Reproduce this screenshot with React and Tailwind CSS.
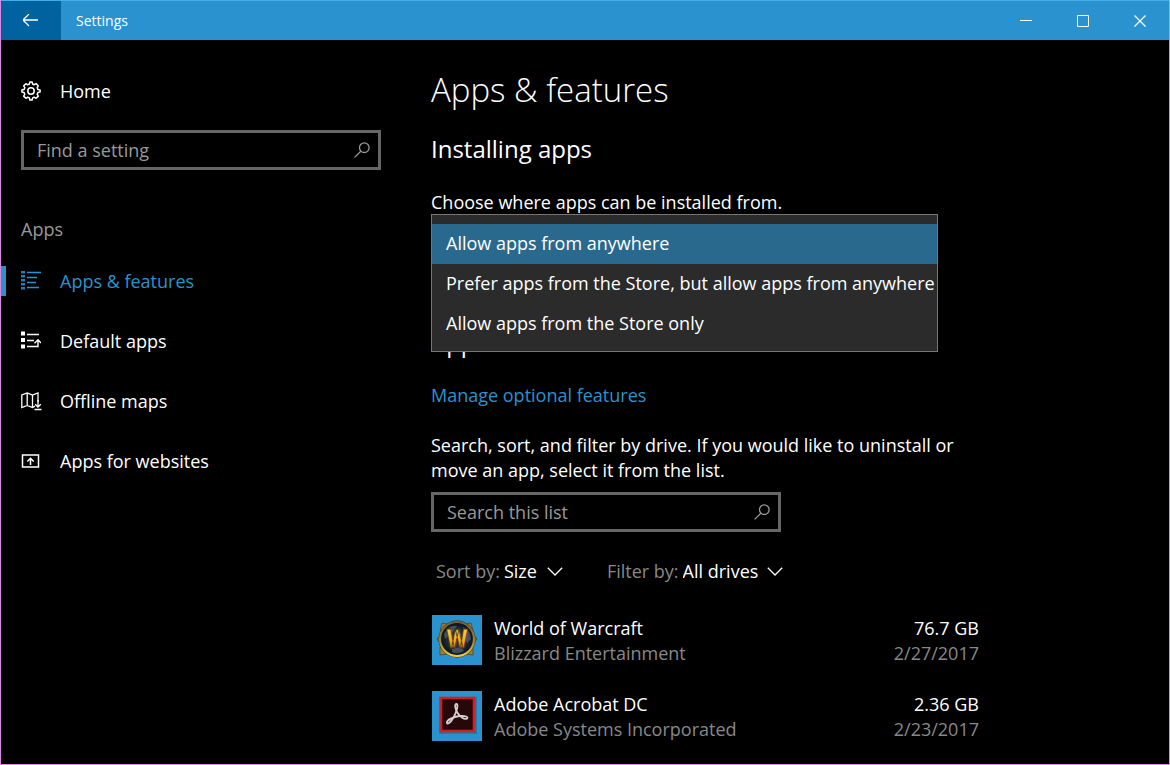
import React, { useState } from "react";

const installSources = [
  "Allow apps from anywhere",
  "Prefer apps from the Store, but allow apps from anywhere",
  "Allow apps from the Store only",
];

const BackIcon = () => (
  <svg width="16" height="14" viewBox="0 0 16 14" fill="none" stroke="currentColor" strokeWidth="1.3">
    <path d="M0 6H15M6 0L0 6L6 12" />
  </svg>
);

const GearIcon = () => (
  <svg width="20" height="20" viewBox="0 0 20 20" fill="none" stroke="currentColor" strokeWidth="1.5" strokeLinejoin="round">
    <path d="M8.9 .9H11.1L11.6 3L13.2 3.7L15.1 2.6L17.3 4.9L16.2 6.7L16.9 8.4L19.1 8.9V11.1L16.9 11.6L16.2 13.2L17.3 15.1L15.1 17.3L13.2 16.2L11.6 16.9L11.1 19.1H8.9L8.4 16.9L6.7 16.2L4.9 17.3L2.7 15.1L3.8 13.2L3.1 11.6L.9 11.1V8.9L3.1 8.4L3.8 6.7L2.7 4.9L4.9 2.7L6.7 3.8L8.4 3Z" />
    <circle cx="10" cy="10" r="3.2" />
  </svg>
);

const SearchIcon = () => (
  <svg width="16" height="16" viewBox="0 0 16 16" fill="none" stroke="currentColor" strokeWidth="1.3">
    <circle cx="10.3" cy="5.7" r="4.8" />
    <path d="M6.8 9.2L.6 15.4" />
  </svg>
);

const ChevronIcon = () => (
  <svg width="16" height="9" viewBox="0 0 16 9" fill="none" stroke="currentColor" strokeWidth="1.3">
    <path d="M.8 .8L8 8L15.2 .8" />
  </svg>
);

const AppsIcon = () => (
  <svg width="20" height="20" viewBox="0 0 20 20" fill="none" stroke="currentColor">
    <path d="M2 0V19" strokeWidth="4" strokeDasharray="2.6 1.4" opacity=".85" />
    <path d="M6 1.5H20M6 6.5H16M6 11.5H15M6 16.5H18" strokeWidth="1.3" />
  </svg>
);

const DefaultAppsIcon = () => (
  <svg width="20" height="20" viewBox="0 0 20 20" fill="none" stroke="currentColor" strokeWidth="1.4">
    <path d="M0 2.5H4M0 9H4M0 15.5H4" strokeWidth="4" />
    <path d="M6 3.5H18M6 9.5H13M6 15.5H17V9M13.5 12.3L17 8.8L20 12" />
  </svg>
);

const MapIcon = () => (
  <svg width="21" height="20" viewBox="0 0 21 20" fill="none" stroke="currentColor" strokeWidth="1.3">
    <path d="M14 15.2L11.5 16.5L6.2 14.5L.8 16.5V4L6.2 2L11.5 4L17 2V11M6.2 2V14.5M11.5 4V16.5" />
    <path d="M17 9V16M14.2 13.2L17 16L19.8 13.2M13.5 18.5H20.5" />
  </svg>
);

const WebsitesIcon = () => (
  <svg width="20" height="20" viewBox="0 0 20 20" fill="none" stroke="currentColor" strokeWidth="1.5">
    <path d="M1.5 4H17.5V16H1.5Z" />
    <path d="M9.5 14V7.5M6.3 10.5L9.5 7.3L12.7 10.5" />
  </svg>
);

const WarcraftLogo = () => (
  <svg width="50" height="50" viewBox="0 0 50 50">
    <defs>
      <linearGradient id="gold" x1="0" y1="0" x2="0" y2="1">
        <stop offset="0" stopColor="#f7d95c" />
        <stop offset=".5" stopColor="#f0b323" />
        <stop offset="1" stopColor="#c87310" />
      </linearGradient>
      <linearGradient id="ring" x1="0" y1="0" x2="0" y2="1">
        <stop offset="0" stopColor="#6f6238" />
        <stop offset=".6" stopColor="#a68731" />
        <stop offset="1" stopColor="#ecca45" />
      </linearGradient>
      <radialGradient id="globe">
        <stop offset="0" stopColor="#3a4a5c" />
        <stop offset=".6" stopColor="#1e2838" />
        <stop offset="1" stopColor="#0b1018" />
      </radialGradient>
    </defs>
    <path d="M10 8L15 9L8 16ZM39 8L41 16L34 9ZM8 40L8 32L15 39ZM41 40L34 39L41 32ZM5 24L8 20V28ZM45 24L42 20V28Z" fill="#96803c" stroke="#3b321a" strokeWidth=".6" />
    <circle cx="25" cy="24" r="18.5" fill="#2b2717" />
    <circle cx="25" cy="24" r="17" fill="url(#globe)" stroke="url(#ring)" strokeWidth="2.2" />
    <path d="M12 19Q17 9 25 11L20 18L13 24ZM31 12Q39 16 39 24L35 28L31 20ZM20 34L29 32L32 36Q25 40 20 37Z" fill="#6b7c94" opacity=".5" />
    <text x="25" y="33" textAnchor="middle" fontFamily="Roboto, sans-serif" fontWeight="900" fontSize="25" fill="url(#gold)" stroke="#5a2f08" strokeWidth=".8">W</text>
  </svg>
);

const AcrobatLogo = () => (
  <svg width="50" height="50" viewBox="0 0 50 50">
    <rect x="7" y="6" width="38" height="37" fill="#0d4f7c" opacity=".35" />
    <rect x="9" y="7" width="33" height="33" fill="#260809" stroke="#cf2023" strokeWidth="2.6" />
    <path d="M24.5 13C22.3 13 22.9 17.5 25.3 21.5C28 26 32.5 28.8 34.8 27.6C37 26.4 33.5 24.2 27.5 25C21 25.8 15 29 14.8 31.5C14.8 34 18.5 32 21.5 26.5C24.8 20.5 26.7 13 24.5 13Z" fill="none" stroke="#d5cfcf" strokeWidth="1.8" strokeLinejoin="round" />
  </svg>
);

const navItems = [
  { label: "Apps & features", Icon: AppsIcon, active: true },
  { label: "Default apps", Icon: DefaultAppsIcon },
  { label: "Offline maps", Icon: MapIcon },
  { label: "Apps for websites", Icon: WebsitesIcon },
];

const apps = [
  { name: "World of Warcraft", publisher: "Blizzard Entertainment", size: "76.7 GB", date: "2/27/2017", Logo: WarcraftLogo },
  { name: "Adobe Acrobat DC", publisher: "Adobe Systems Incorporated", size: "2.36 GB", date: "2/23/2017", Logo: AcrobatLogo },
];

function TitleBar() {
  return (
    <header className="flex h-10 shrink-0 border-t border-[#45aee6] bg-[#2a93cf]">
      <button aria-label="Back" className="flex w-[60px] items-center justify-center bg-[#0063a0]">
        <BackIcon />
      </button>
      <h1 className="flex items-center pl-[15px] text-[14px]">Settings</h1>
      <div className="ml-auto flex pr-px">
        <button aria-label="Minimize" className="flex w-[57px] items-center justify-center">
          <svg width="12" height="12" stroke="currentColor"><path d="M0 5.5H12" /></svg>
        </button>
        <button aria-label="Maximize" className="flex w-[57px] items-center justify-center">
          <svg width="12" height="12" fill="none" stroke="currentColor"><path d="M.5 .5H11.5V11.5H.5Z" /></svg>
        </button>
        <button aria-label="Close" className="flex w-[57px] items-center justify-center">
          <svg width="12" height="12" stroke="currentColor" strokeWidth="1.2"><path d="M.5 .5L11.5 11.5M11.5 .5L.5 11.5" /></svg>
        </button>
      </div>
    </header>
  );
}

function SearchBox({ label, className }) {
  return (
    <label className={`flex h-10 items-center border-[3px] border-[#666] pr-2 pl-[13px] text-[#999] ${className}`}>
      <input type="text" aria-label={label} placeholder={label} className="min-w-0 flex-1 bg-transparent text-white outline-none placeholder:text-[#999]" />
      <SearchIcon />
    </label>
  );
}

function Sidebar() {
  return (
    <aside className="w-[430px] shrink-0 pt-[31px]">
      <a href="#home" className="flex h-10 items-center pl-5">
        <span className="w-[39px]">
          <GearIcon />
        </span>
        Home
      </a>
      <SearchBox label="Find a setting" className="mt-[19px] ml-5 w-[360px]" />
      <h2 className="mt-[47px] pl-5 text-[#999]">Apps</h2>
      <nav className="mt-[9px]">
        {navItems.map(({ label, Icon, active }) => (
          <a key={label} href="#apps" className={`flex h-[60px] items-center ${active ? "text-[#2a93cf]" : ""}`}>
            <span className={`h-[30px] w-[5px] ${active ? "bg-[#2a93cf]" : ""}`} />
            <span className="ml-[15px] w-[39px]">
              <Icon />
            </span>
            {label}
          </a>
        ))}
      </nav>
    </aside>
  );
}

function InstallSource() {
  const [selected, setSelected] = useState(0);

  return (
    <div className="relative h-10 w-[507px] max-w-full">
      <ul role="listbox" aria-labelledby="source-label" className="absolute inset-x-0 -top-px z-10 border border-[#767676] bg-[#2b2b2b] pt-[9px] pb-[7px]">
        {installSources.map((source, idx) => (
          <li key={source} role="option" aria-selected={idx === selected}>
            <button
              onClick={() => setSelected(idx)}
              className={`block h-10 w-full pb-0.5 pl-[14px] text-left whitespace-nowrap ${idx === selected ? "bg-[#29698d]" : ""}`}
            >
              {source}
            </button>
          </li>
        ))}
      </ul>
    </div>
  );
}

function Filter({ id, label, options, className }) {
  return (
    <div className="flex items-center">
      <label htmlFor={id} className="text-[#888]">{label}</label>
      <select id={id} className={`ml-1 appearance-none bg-black ${className}`}>
        {options.map((option) => (
          <option key={option}>{option}</option>
        ))}
      </select>
      <ChevronIcon />
    </div>
  );
}

export default function App() {
  return (
    <div className="flex min-h-screen flex-col border-x border-b border-[#d88ae0] bg-black font-['Open_Sans','Noto_Sans',sans-serif] text-[18px] leading-[25px] text-white">
      <TitleBar />
      <div className="flex flex-1">
        <Sidebar />
        <main className="min-w-0 flex-1 pt-[26px] pr-5">
          <h2 className="text-[33px] leading-[48px] font-light">Apps &amp; features</h2>
          <h3 className="mt-[19px] text-[24px] leading-8">Installing apps</h3>
          <p id="source-label" className="mt-[25px]">Choose where apps can be installed from.</p>
          <InstallSource />
          <h3 className="mt-[72px] text-[24px] leading-8">Apps &amp; features</h3>
          <a href="#optional" className="mt-6 inline-block text-[#2a93cf]">Manage optional features</a>
          <p className="mt-[25px] max-w-[540px]">
            Search, sort, and filter by drive. If you would like to uninstall or move an app, select it from the list.
          </p>
          <SearchBox label="Search this list" className="mt-[9px] w-[350px]" />
          <div className="mt-[27px] flex gap-11 pl-[5px]">
            <Filter id="sort" label="Sort by:" options={["Size", "Name", "Install date"]} className="w-[43px]" />
            <Filter id="drive" label="Filter by:" options={["All drives", "Windows (C:)"]} className="w-[84px]" />
          </div>
          <ul className="mt-[31px] flex max-w-[548px] flex-col gap-[25px]">
            {apps.map(({ name, publisher, size, date, Logo }) => (
              <li key={name} className="flex items-start">
                <div className="ml-px bg-[#2a93cf]">
                  <Logo />
                </div>
                <div className="ml-3 flex-1 pt-px">
                  <p>{name}</p>
                  <p className="text-[#888]">{publisher}</p>
                </div>
                <div className="pt-px text-right">
                  <p>{size}</p>
                  <p className="text-[#888]">{date}</p>
                </div>
              </li>
            ))}
          </ul>
        </main>
      </div>
    </div>
  );
}
